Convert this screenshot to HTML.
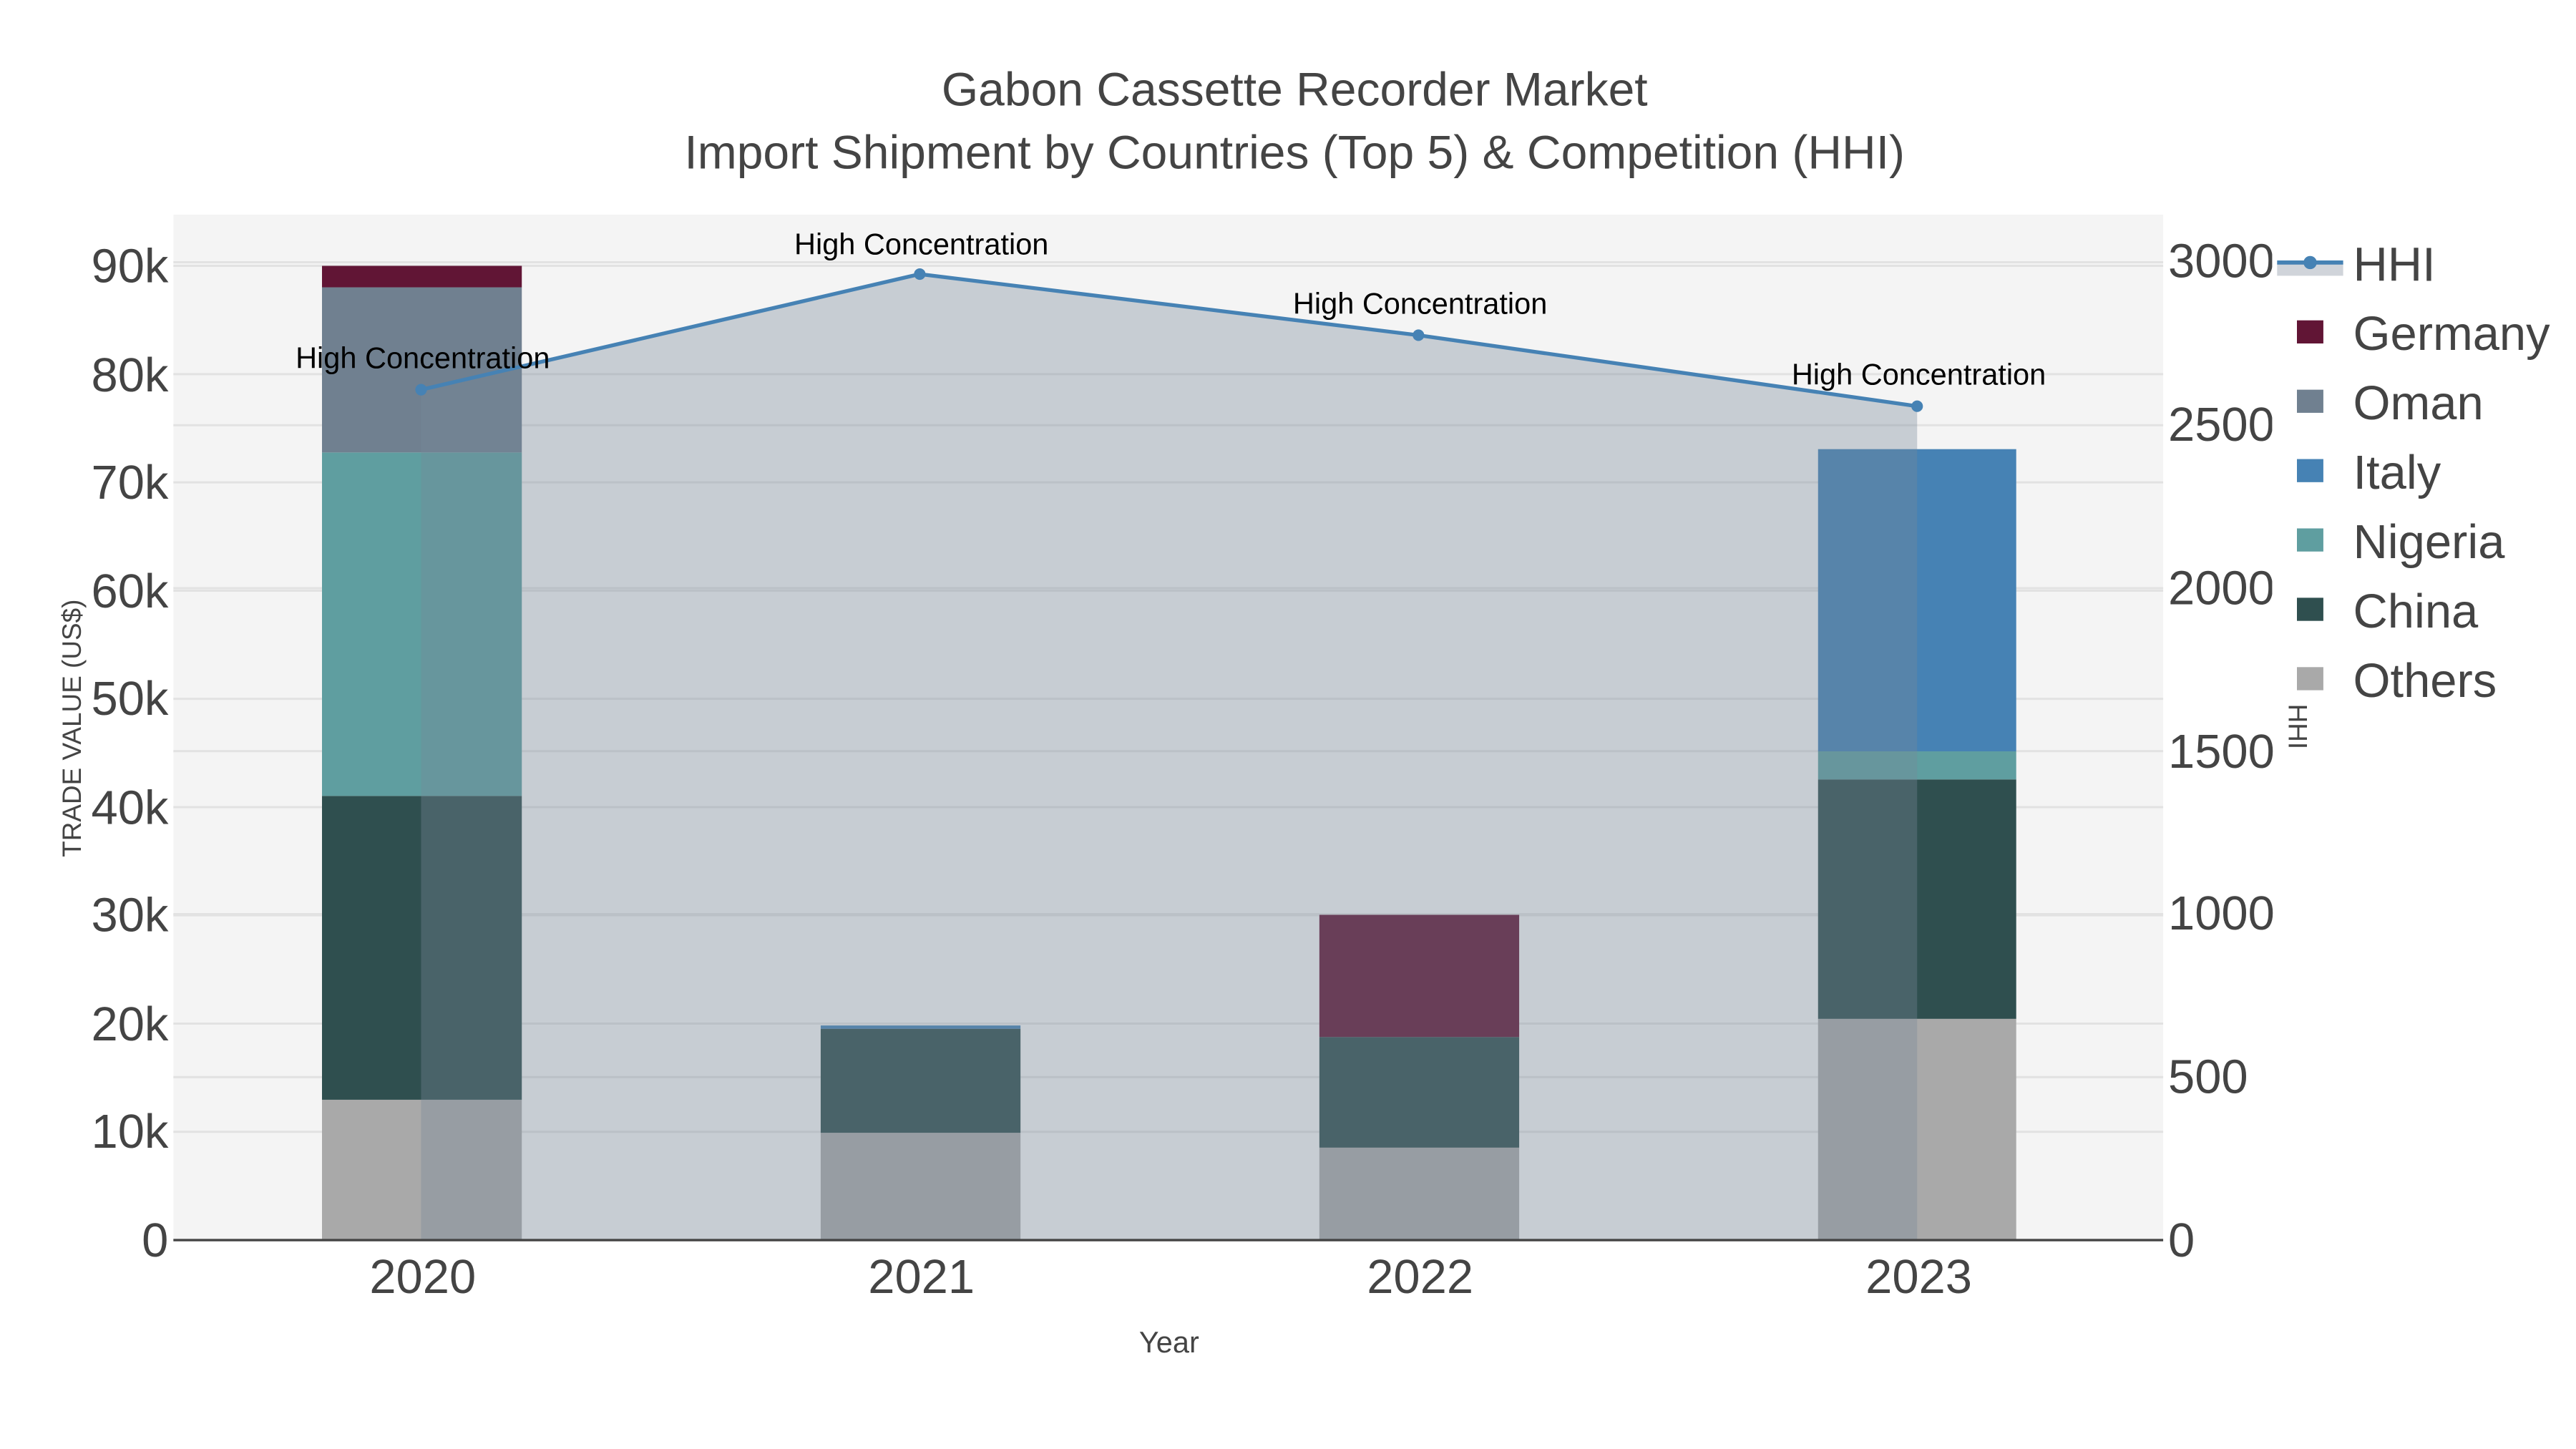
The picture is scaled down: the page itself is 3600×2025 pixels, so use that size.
<!DOCTYPE html>
<html><head><meta charset="utf-8"><style>html,body{margin:0;padding:0;background:#fff;}svg{display:block}</style></head>
<body>
<svg width="3600" height="2025" viewBox="0 0 1560 877.5" preserveAspectRatio="none" xmlns="http://www.w3.org/2000/svg" font-family="Liberation Sans, sans-serif">
<rect width="1560" height="877.5" fill="#fff"/>
<rect x="105" y="130" width="1205" height="621" fill="#f4f4f4"/>
<g stroke="#e2e2e2" stroke-width="1.3">
<line x1="105" x2="1310" y1="685.4" y2="685.4"/><line x1="105" x2="1310" y1="619.9" y2="619.9"/><line x1="105" x2="1310" y1="554.3" y2="554.3"/><line x1="105" x2="1310" y1="488.8" y2="488.8"/><line x1="105" x2="1310" y1="423.2" y2="423.2"/><line x1="105" x2="1310" y1="357.7" y2="357.7"/><line x1="105" x2="1310" y1="292.1" y2="292.1"/><line x1="105" x2="1310" y1="226.6" y2="226.6"/><line x1="105" x2="1310" y1="161" y2="161"/>
<line x1="105" x2="1310" y1="652.3" y2="652.3"/><line x1="105" x2="1310" y1="553.6" y2="553.6"/><line x1="105" x2="1310" y1="454.9" y2="454.9"/><line x1="105" x2="1310" y1="356.2" y2="356.2"/><line x1="105" x2="1310" y1="257.5" y2="257.5"/><line x1="105" x2="1310" y1="158.8" y2="158.8"/>
</g>
<g>
<rect x="195" y="666" width="121" height="85" fill="#a9a9a9"/>
<rect x="195" y="482" width="121" height="184" fill="#2f4f4f"/>
<rect x="195" y="274" width="121" height="208" fill="#5f9ea0"/>
<rect x="195" y="174" width="121" height="100" fill="#708090"/>
<rect x="195" y="161" width="121" height="13" fill="#611535"/>
<rect x="497" y="686" width="121" height="65" fill="#a9a9a9"/>
<rect x="497" y="623" width="121" height="63" fill="#2f4f4f"/>
<rect x="497" y="621" width="121" height="2" fill="#4682b4"/>
<rect x="799" y="695" width="121" height="56" fill="#a9a9a9"/>
<rect x="799" y="628" width="121" height="67" fill="#2f4f4f"/>
<rect x="799" y="554" width="121" height="74" fill="#611535"/>
<rect x="1101" y="617" width="120" height="134" fill="#a9a9a9"/>
<rect x="1101" y="472" width="120" height="145" fill="#2f4f4f"/>
<rect x="1101" y="455" width="120" height="17" fill="#5f9ea0"/>
<rect x="1101" y="272" width="120" height="183" fill="#4682b4"/>
</g>
<polygon points="255,236 557,166 859,203 1161,246 1161,751 255,751" fill="rgba(119,136,153,0.36)"/>
<line x1="105" x2="1310" y1="751" y2="751" stroke="#444" stroke-width="1.5"/>
<polyline points="255,236 557,166 859,203 1161,246" fill="none" stroke="#4682b4" stroke-width="2.3"/>
<g fill="#4682b4"><circle cx="255" cy="236" r="3.5"/><circle cx="557" cy="166" r="3.5"/><circle cx="859" cy="203" r="3.5"/><circle cx="1161" cy="246" r="3.5"/></g>
<g font-size="18" fill="#000" text-anchor="middle">
<text x="256" y="223">High Concentration</text>
<text x="558" y="154">High Concentration</text>
<text x="860" y="190">High Concentration</text>
<text x="1162" y="233">High Concentration</text>
</g>
<g font-size="28.6" fill="#444" text-anchor="middle">
<text x="784" y="64">Gabon Cassette Recorder Market</text>
<text x="784" y="102">Import Shipment by Countries (Top 5) &amp; Competition (HHI)</text>
</g>
<g font-size="29" fill="#444" text-anchor="end">
<text x="102" y="761">0</text><text x="102" y="695">10k</text><text x="102" y="630">20k</text><text x="102" y="564">30k</text><text x="102" y="499">40k</text><text x="102" y="433">50k</text><text x="102" y="368">60k</text><text x="102" y="302">70k</text><text x="102" y="237">80k</text><text x="102" y="171">90k</text>
</g>
<g font-size="29" fill="#444">
<text x="1313" y="761">0</text><text x="1313" y="662">500</text><text x="1313" y="563">1000</text><text x="1313" y="465">1500</text><text x="1313" y="366">2000</text><text x="1313" y="267">2500</text><text x="1313" y="168">3000</text>
</g>
<rect x="1376" y="140" width="184" height="290" fill="#fff"/>
<g font-size="29" fill="#444" text-anchor="middle">
<text x="256" y="783">2020</text><text x="558" y="783">2021</text><text x="860" y="783">2022</text><text x="1162" y="783">2023</text>
</g>
<text x="708" y="819" font-size="18" fill="#444" text-anchor="middle">Year</text>
<text transform="translate(49,441) rotate(-90)" font-size="16" fill="#444" text-anchor="middle">TRADE VALUE (US$)</text>
<text transform="translate(1386,440) rotate(90)" font-size="16" fill="#444" text-anchor="middle">HHI</text>
<rect x="1379" y="159" width="40" height="8" fill="#d0d4da"/>
<line x1="1379" x2="1419" y1="159" y2="159" stroke="#4682b4" stroke-width="2.5"/>
<circle cx="1399" cy="159" r="4" fill="#4682b4"/>
<g>
<rect x="1391" y="194" width="16" height="14" fill="#611535"/>
<rect x="1391" y="236" width="16" height="14" fill="#708090"/>
<rect x="1391" y="278" width="16" height="14" fill="#4682b4"/>
<rect x="1391" y="320" width="16" height="14" fill="#5f9ea0"/>
<rect x="1391" y="362" width="16" height="14" fill="#2f4f4f"/>
<rect x="1391" y="404" width="16" height="14" fill="#a9a9a9"/>
</g>
<g font-size="29" fill="#444">
<text x="1425" y="170">HHI</text>
<text x="1425" y="212">Germany</text>
<text x="1425" y="254">Oman</text>
<text x="1425" y="296">Italy</text>
<text x="1425" y="338">Nigeria</text>
<text x="1425" y="380">China</text>
<text x="1425" y="422">Others</text>
</g>
</svg>
</body></html>
